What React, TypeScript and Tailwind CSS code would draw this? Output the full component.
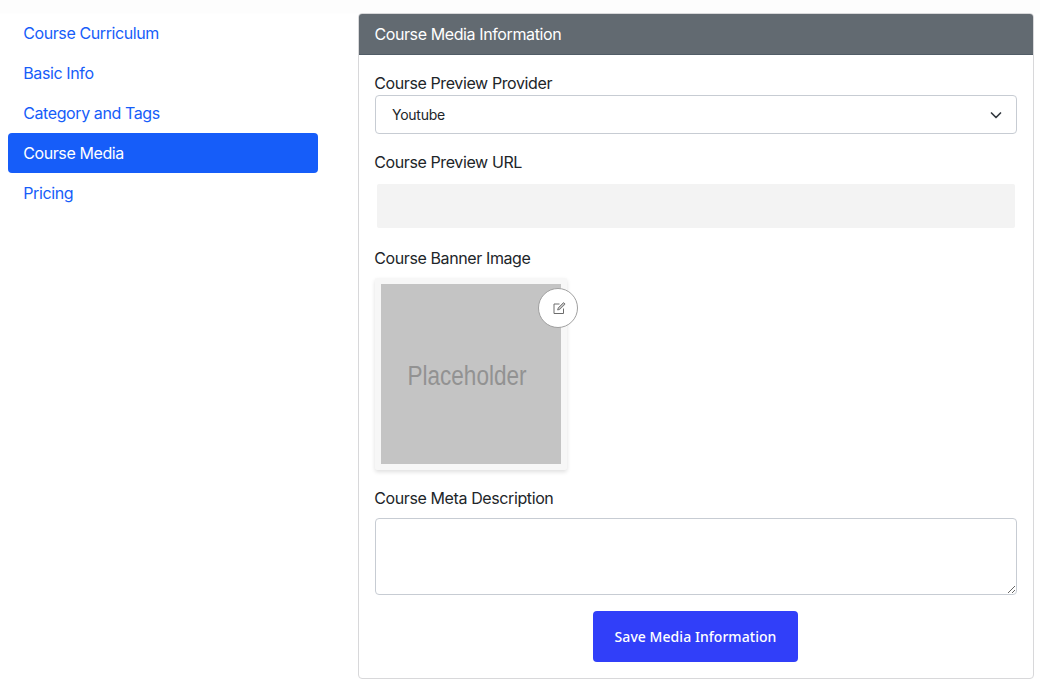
import React from "react";

const navItems: { label: string; spacing: string; active?: boolean }[] = [
  { label: "Course Curriculum", spacing: "tracking-[-0.4px]" },
  { label: "Basic Info", spacing: "tracking-[-0.38px]" },
  { label: "Category and Tags", spacing: "tracking-[-0.4px]" },
  { label: "Course Media", spacing: "tracking-[-0.4px]", active: true },
  { label: "Pricing", spacing: "tracking-[-0.36px]" },
];

function Label({ text, className = "" }: { text: string; className?: string }) {
  return (
    <label className={`-ml-[0.8px] block h-6 leading-6 tracking-[-0.39px] whitespace-nowrap ${className}`}>
      {text}
    </label>
  );
}

function Sidebar() {
  return (
    <nav className="w-[310px] shrink-0">
      {navItems.map((item) => (
        <a
          key={item.label}
          className={`block h-10 rounded-[4px] px-[15.2px] py-2 leading-6 ${item.spacing} ${
            item.active ? "bg-[#165df9] text-white" : "text-[#165df9]"
          }`}
        >
          {item.label}
        </a>
      ))}
    </nav>
  );
}

function BannerImage() {
  return (
    <div className="relative mt-2 h-48 w-48 rounded-[2px] bg-[#f7f7f7] p-1.5 shadow-[0_2px_4px_rgba(0,0,0,0.13)]">
      <div className="flex h-[180px] w-[180px] items-center justify-center bg-[#c4c4c4]">
        <svg width="180" height="180" viewBox="0 0 180 180">
          <text
            x="26.5"
            y="101"
            textLength="119"
            lengthAdjust="spacingAndGlyphs"
            className="fill-[#929292] text-[27px] [font-family:'Liberation_Sans',sans-serif]"
          >
            Placeholder
          </text>
        </svg>
      </div>
      <button className="absolute top-[10px] left-[163px] flex h-10 w-10 items-center justify-center rounded-full border border-[#a0a0a0] bg-white">
        <svg
          width="14"
          height="14"
          viewBox="0 0 14 14"
          fill="none"
          stroke="#6c6c6c"
          className="ml-px"
        >
          <path d="M7.5 3H2v9.5h9.5V7.5" />
          <path d="M5.6 9l.7-2.2 5.2-5.2 1.6 1.5-5.3 5.2z" fill="#c4c4c4" strokeWidth="0.9" />
        </svg>
      </button>
    </div>
  );
}

export default function App() {
  return (
    <div className="h-[682px] w-[1040px] overflow-hidden bg-[linear-gradient(#fdfdfd_0,#fdfdfd_13px,#fff_14px)] pt-[13px] pl-2 text-[16px] text-[#212529] [font-family:Inter,sans-serif]">
      <div className="flex gap-10">
        <Sidebar />
        <main className="h-[666px] w-[676px] rounded-[4px] border border-[#d8d8da] bg-white">
          <header className="h-[41px] rounded-t-[3px] border-b border-[#515c66] bg-[#626a71] px-[15.4px] pt-2 leading-6 tracking-[-0.39px] text-white">
            Course Media Information
          </header>
          <form className="px-4 pt-4" onSubmit={(e) => e.preventDefault()}>
            <Label text="Course Preview Provider" />
            <div className="flex h-[39px] items-center justify-between rounded-[4px] border border-[#c7ccd3] pr-3 pl-4 text-[14px]">
              <span className="tracking-[-0.25px]">Youtube</span>
              <svg
                width="16"
                height="12"
                viewBox="0 0 16 12"
                fill="none"
                stroke="#343a40"
                strokeWidth="1.7"
                strokeLinecap="round"
                strokeLinejoin="round"
              >
                <path d="m3.5 4 4.5 4.5L12.5 4" />
              </svg>
            </div>
            <Label text="Course Preview URL" className="mt-4" />
            <input
              type="text"
              className="mx-0.5 mt-2.5 block h-11 w-[638px] rounded-[2px] bg-[#f3f3f3] px-4 outline-none"
            />
            <Label text="Course Banner Image" className="mt-[18px]" />
            <BannerImage />
            <Label text="Course Meta Description" className="mt-4" />
            <textarea className="mt-2 block h-[77px] w-full rounded-[4px] border border-[#c7ccd3] bg-white" />
            <div className="mt-4 flex justify-center pr-px">
              <button className="h-[51px] w-[205px] rounded-[4px] bg-[#313ff9] text-[14px] font-medium tracking-[0.05px] whitespace-nowrap text-white [font-family:'Noto_Sans',sans-serif]">
                Save Media Information
              </button>
            </div>
          </form>
        </main>
      </div>
    </div>
  );
}
